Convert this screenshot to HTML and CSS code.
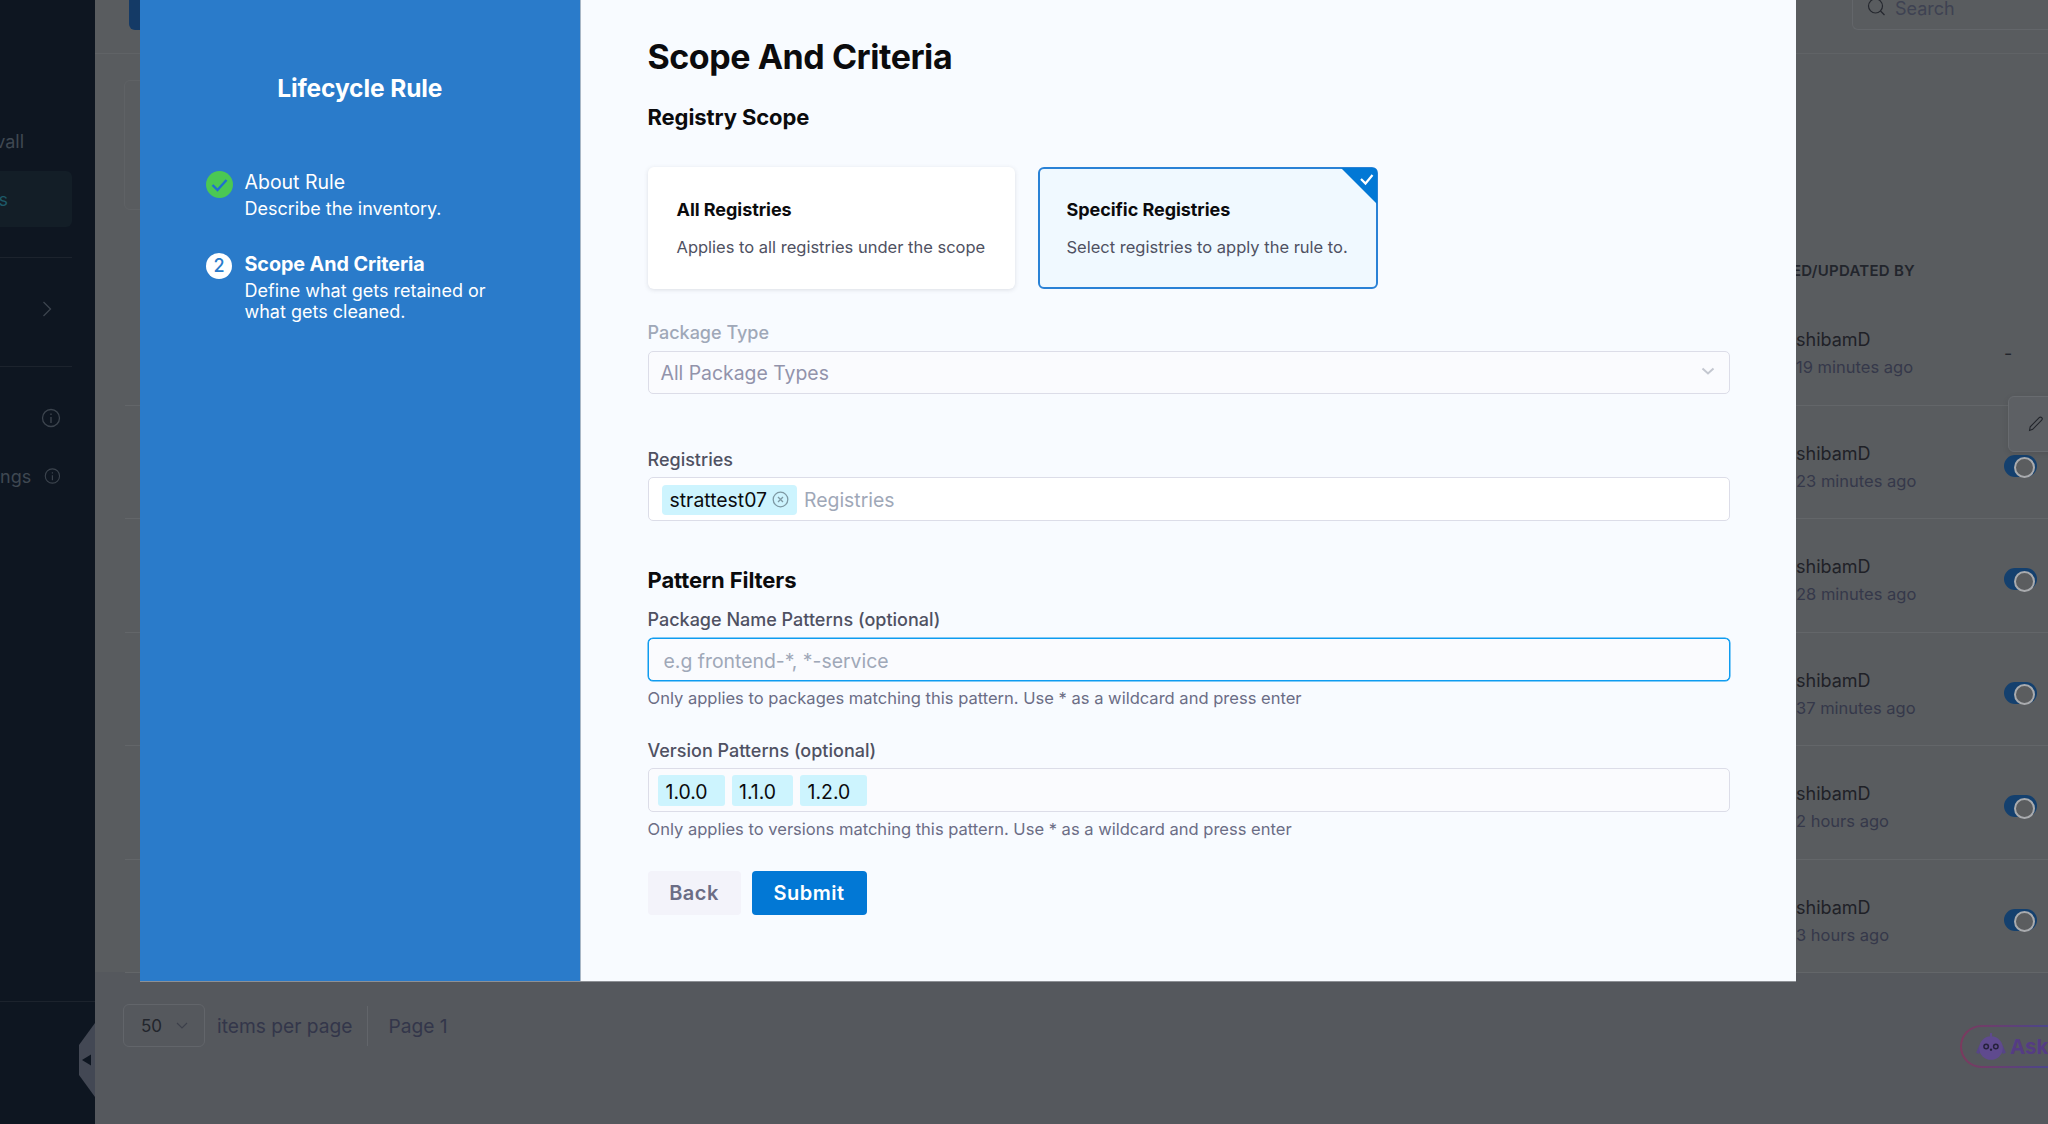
FILE: index.html
```html
<!DOCTYPE html>
<html lang="en">
<head>
<meta charset="utf-8">
<title>Lifecycle Rule</title>
<link rel="stylesheet" href="styles.css">
</head>
<body>
<div class="app">
  <aside class="sidebar">
    <div class="nav-item nav-first"><span>vall</span></div>
    <div class="nav-item nav-active"><span>s</span></div>
    <div class="nav-sep nav-sep-a"></div>
    <div class="nav-chevron">
      <svg width="12" height="18" viewBox="0 0 12 18"><path d="M2.500 2l7 7-7 7" fill="none" stroke="#3c444e" stroke-width="1.300"/></svg>
    </div>
    <div class="nav-sep nav-sep-b"></div>
    <div class="nav-info nav-info-a">
      <svg class="info" width="20" height="20" viewBox="0 0 20 20"><circle cx="10" cy="10" r="8.500" fill="none" stroke="#3c444e" stroke-width="1.300"/><path d="M10 9v6M10 5.500v1.500" stroke="#3c444e" stroke-width="1.400"/></svg>
    </div>
    <div class="nav-info nav-info-b">
      <span>ngs</span>
      <svg class="info" width="20" height="20" viewBox="0 0 20 20"><circle cx="10" cy="10" r="8.500" fill="none" stroke="#3c444e" stroke-width="1.300"/><path d="M10 9v6M10 5.500v1.500" stroke="#3c444e" stroke-width="1.400"/></svg>
    </div>
    <div class="nav-foot"></div>
    <svg class="collapse" width="16" height="74" viewBox="0 0 16 74"><path d="M16 0L0 22v30l16 22z" fill="#434854"/><path d="M3 37l9-5.500v11z" fill="#0e1621"/></svg>
  </aside>

  <main class="main">
    <div class="upper">
      <header class="topbar">
        <div class="cta"></div>
        <div class="search">
          <svg width="20" height="20" viewBox="0 0 20 20"><circle cx="8.500" cy="7" r="7" fill="none" stroke="#25282f" stroke-width="1.200"/><path d="M13.500 12l4 4" stroke="#25282f" stroke-width="1.200"/></svg>
          <span>Search</span>
        </div>
      </header>
      <div class="summary"></div>
      <div class="table">
        <div class="thead"><span>ED/UPDATED BY</span></div>
        <div class="row"><div class="cell-name"><b>shibamD</b><small>19 minutes ago</small></div><div class="dash">-</div></div>
        <div class="row"><div class="cell-name"><b>shibamD</b><small>23 minutes ago</small></div><div class="toggle"></div></div>
        <div class="row"><div class="cell-name"><b>shibamD</b><small>28 minutes ago</small></div><div class="toggle"></div></div>
        <div class="row"><div class="cell-name"><b>shibamD</b><small>37 minutes ago</small></div><div class="toggle"></div></div>
        <div class="row"><div class="cell-name"><b>shibamD</b><small>2 hours ago</small></div><div class="toggle"></div></div>
        <div class="row"><div class="cell-name"><b>shibamD</b><small>3 hours ago</small></div><div class="toggle"></div></div>
      </div>
    </div>
    <footer class="pager">
      <div class="page-size">
        <span>50</span>
        <svg width="12" height="8" viewBox="0 0 12 8"><path d="M1 1l5 5 5-5" fill="none" stroke="#3d404b" stroke-width="1.100"/></svg>
      </div>
      <span class="pager-text">items per page</span>
      <span class="pager-rule"></span>
      <span class="pager-text">Page 1</span>
      <span class="pager-box"></span>
    </footer>
  </main>

  <div class="edit-pop">
    <svg width="20" height="20" viewBox="0 0 20 20"><path d="M3.500 16.500l.7-3.700 9-9.200c.7-.7 1.800-.7 2.500 0 .7.700.7 1.800 0 2.500l-9 9.200z" fill="none" stroke="#22252b" stroke-width="1.100"/></svg>
  </div>

  <div class="ask">
    <svg width="30" height="28" viewBox="0 0 28 26">
      <path d="M14 0v4" stroke="#5f4a8e" stroke-width="2"/>
      <path d="M1.500 19l3-7M26.500 19l-3-7" stroke="#564488" stroke-width="3"/>
      <circle cx="14" cy="14" r="11" fill="#5f4a8e"/>
      <circle cx="9.500" cy="12.500" r="2.100" fill="none" stroke="#26213c" stroke-width="1.400"/>
      <circle cx="18.500" cy="12.500" r="2.100" fill="none" stroke="#26213c" stroke-width="1.400"/>
      <circle cx="14" cy="15.500" r="1.100" fill="#26213c"/>
    </svg>
    <span class="ask-text">Ask</span>
  </div>

  <section class="modal">
    <aside class="steps">
      <h2 class="steps-title">Lifecycle Rule</h2>
      <ol class="step-list">
        <li class="step">
          <svg class="step-icon" width="27" height="27" viewBox="0 0 27 27"><circle cx="13.500" cy="13.500" r="13.500" fill="#4bc853"/><path d="M6.500 14l5 5 9-10" fill="none" stroke="#1f6fd0" stroke-width="2.400"/></svg>
          <div><div class="step-name">About Rule</div><div class="step-desc">Describe the inventory.</div></div>
        </li>
        <li class="step step-current">
          <span class="step-num">2</span>
          <div><div class="step-name">Scope And Criteria</div><div class="step-desc">Define what gets retained or<br>what gets cleaned.</div></div>
        </li>
      </ol>
    </aside>

    <form class="form">
      <h1>Scope And Criteria</h1>
      <h3 class="sub-h">Registry Scope</h3>
      <div class="cards">
        <div class="card card-plain">
          <div class="card-title">All Registries</div>
          <div class="card-desc">Applies to all registries under the scope</div>
        </div>
        <div class="card card-on">
          <svg class="card-mark" width="36" height="36" viewBox="0 0 36 36"><path d="M0 0h32a4 4 0 0 1 4 4v32z" fill="#0278d5"/><path d="M20 11l4.500 4.500 7-8.500" fill="none" stroke="#fff" stroke-width="2.200"/></svg>
          <div class="card-title">Specific Registries</div>
          <div class="card-desc">Select registries to apply the rule to.</div>
        </div>
      </div>

      <div class="label label-muted lab-type">Package Type</div>
      <div class="box box-select">
        <span class="val-muted">All Package Types</span>
        <svg width="14" height="9" viewBox="0 0 14 9"><path d="M1.500 1.500l5.500 5 5.500-5" fill="none" stroke="#c3c7d0" stroke-width="2"/></svg>
      </div>

      <div class="label lab-reg">Registries</div>
      <div class="box box-reg">
        <span class="chip">strattest07
          <svg width="17" height="17" viewBox="0 0 17 17"><circle cx="8.500" cy="8.500" r="7.300" fill="none" stroke="#7e99a3" stroke-width="1.300"/><path d="M6 6l5 5M11 6l-5 5" stroke="#7e99a3" stroke-width="1.300"/></svg>
        </span>
        <span class="ph">Registries</span>
      </div>

      <h3 class="sub-h sub-pattern">Pattern Filters</h3>
      <div class="label lab-name">Package Name Patterns (optional)</div>
      <div class="box box-focus"><span class="ph">e.g frontend-*, *-service</span></div>
      <div class="help">Only applies to packages matching this pattern. Use * as a wildcard and press enter</div>

      <div class="label lab-ver">Version Patterns (optional)</div>
      <div class="box box-tags">
        <span class="tag">1.0.0</span>
        <span class="tag">1.1.0</span>
        <span class="tag">1.2.0</span>
      </div>
      <div class="help help-ver">Only applies to versions matching this pattern. Use * as a wildcard and press enter</div>

      <div class="actions">
        <button type="button" class="btn btn-back">Back</button>
        <button type="button" class="btn btn-submit">Submit</button>
      </div>
    </form>
  </section>
</div>
</body>
</html>
```

FILE: styles.css
```css
* { box-sizing: border-box; }
html, body { margin: 0; height: 100%; }
body {
  font-family: "Inter", "Liberation Sans", sans-serif;
  background: #55585d;
  overflow: hidden;
}
.app { position: relative; display: flex; width: 2048px; height: 1124px; overflow: hidden; }

/* sidebar */
.sidebar {
  position: relative;
  flex: 0 0 95px;
  width: 95px;
  background: #0e1621;
  color: #3f4852;
  font-size: 18px;
}
.nav-item { display: flex; justify-content: flex-end; align-items: center; height: 56px; width: 72px; }
.nav-first { margin-top: 113px; padding-right: 48px; height: 56px; }
.nav-active { margin-top: 2px; background: #131e27; border-radius: 0 6px 6px 0; padding-right: 64px; color: #1d5968; }
.nav-sep { height: 1px; width: 72px; background: #1c232d; }
.nav-sep-a { margin-top: 30px; }
.nav-chevron { height: 108px; display: flex; align-items: center; padding: 0 0 7px 41px; }
.nav-info { display: flex; align-items: center; justify-content: flex-end; gap: 13px; width: 61px; height: 30px; }
.nav-info-a { margin-top: 36px; }
.nav-info-b { margin-top: 28px; }
.nav-foot { position: absolute; left: 0; right: 0; top: 1001px; height: 1px; background: #1c232d; }
.collapse { position: absolute; right: 0; top: 1023px; }

/* page behind the dialog */
.main { flex: 1; min-width: 0; display: flex; flex-direction: column; overflow: hidden; }
.upper { background: #595c5f; height: 972px; }
.topbar {
  height: 54px;
  display: flex;
  justify-content: space-between;
  border-bottom: 1px solid #606366;
  padding-left: 34px;
}
.cta { width: 30px; height: 30px; background: #143a66; border-radius: 0 0 0 6px; }
.search {
  width: 196px;
  height: 30px;
  display: flex;
  align-items: center;
  gap: 8px;
  padding: 0 0 12px 14px;
  font-size: 18px;
  color: #3e4252;
  border: 1px solid #63666a;
  border-top: 0;
  border-right: 0;
  border-radius: 0 0 0 6px;
}
.summary {
  margin: 26px 0 0 29px;
  width: 1500px;
  height: 130px;
  border: 1px solid #5f6265;
  border-radius: 6px;
}
.table { margin: 41px 0 0 30px; }
.thead {
  height: 41px;
  display: flex;
  justify-content: flex-end;
  align-items: center;
  padding: 0 133px 2px 0;
  font-size: 15px;
  font-weight: 600;
  color: #22252c;
  letter-spacing: .25px;
}
.row {
  height: 113.500px;
  display: grid;
  grid-template-columns: 1fr 208px 44px;
  align-items: center;
  padding-top: 11px;
  border-bottom: 1px solid #636669;
}
.cell-name { grid-column: 2; display: flex; flex-direction: column; gap: 5px; }
.cell-name b { font-weight: 400; font-size: 18px; line-height: 22px; color: #1f2127; }
.cell-name small { font-size: 16.500px; line-height: 22px; color: #35384a; }
.dash { grid-column: 3; color: #22252c; font-size: 18px; }
.toggle {
  grid-column: 3;
  position: relative;
  width: 33px;
  height: 22px;
  margin-top: -3px;
  background: #14406e;
  border-radius: 11px;
}
.toggle::after {
  content: "";
  position: absolute;
  right: 2px;
  top: 2.500px;
  width: 17px;
  height: 17px;
  border-radius: 50%;
  background: #5b5d5f;
  border: 2px solid #a9abae;
}

/* pager */
.pager { position: relative; display: flex; align-items: center; height: 43px; margin: 32px 0 0 28px; font-size: 19.200px; color: #33364a; }
.page-size {
  width: 82px;
  height: 43px;
  display: flex;
  align-items: center;
  gap: 14px;
  padding-left: 17px;
  border: 1px solid #62656a;
  border-radius: 6px;
  font-size: 17px;
  color: #22252c;
  margin-right: 12px;
}
.pager-text { white-space: nowrap; }
.pager-rule { width: 1px; height: 40px; background: #62656a; margin: 0 20px 0 15px; }
.pager-box { position: absolute; left: 1939px; top: 1px; width: 40px; height: 40px; border: 1px solid #62656a; border-radius: 6px; }

/* overlays on the page */
.edit-pop {
  position: absolute;
  left: 2008px;
  top: 396px;
  width: 48px;
  height: 56px;
  background: #5d6064;
  border: 1px solid #686b6f;
  border-radius: 6px;
  box-shadow: 0 2px 6px rgba(0,0,0,.1);
  display: flex;
  align-items: center;
  padding-left: 17px;
}
.ask {
  position: absolute;
  left: 1960px;
  top: 1025px;
  width: 120px;
  height: 43px;
  border: 2px solid transparent;
  border-radius: 22px;
  background: linear-gradient(#55585d, #55585d) padding-box, linear-gradient(90deg, #7c3a5e, #3a4a9a) border-box;
  display: flex;
  align-items: center;
  gap: 4px;
  padding-left: 14px;
  font-size: 20.500px;
  font-weight: 700;
}
.ask-text { color: #553c84; }

/* dialog */
.modal {
  position: absolute;
  left: 139.500px;
  top: 0;
  width: 1656.500px;
  height: 982px;
  display: flex;
  border-bottom: 1px solid #8d9095;
}
.steps { flex: 0 0 441.500px; background: #2a7bca; color: #fff; border-right: 1px solid #a9b7c6; }
.steps-title { margin: 72px 0 0; text-align: center; font-size: 24.500px; line-height: 32px; font-weight: 700; letter-spacing: -.1px; }
.step-list { list-style: none; margin: 0; padding: 0 0 0 66.500px; }
.step { display: flex; gap: 11.500px; }
.step:first-child { margin-top: 65px; }
.step-current { margin-top: 32px; }
.step-icon { flex: none; margin-top: 2px; }
.step-num {
  flex: 0 0 26px;
  width: 26px;
  height: 26px;
  margin: 2px 1px 0 0;
  border-radius: 50%;
  background: #fff;
  color: #2a7bca;
  font-size: 18px;
  font-weight: 500;
  line-height: 26px;
  text-align: center;
}
.step-name { font-size: 19.500px; line-height: 26px; }
.step-desc { font-size: 18px; line-height: 21px; }
.step:first-child .step-desc { margin-top: 3px; }
.step-current .step-desc { margin-top: 3px; }
.step-current .step-name { font-size: 19.800px; font-weight: 700; letter-spacing: -.1px; }

.form { flex: 1; background: #f8fbff; padding: 36px 66px 0 66.500px; }
h1 { margin: 0 0 24px; font-size: 34px; line-height: 42px; font-weight: 700; letter-spacing: -.45px; color: #0b0b0d; }
.sub-h { margin: 0; font-size: 22px; line-height: 30px; font-weight: 700; letter-spacing: -.1px; color: #0b0b0d; }
.sub-pattern { margin-top: 44px; }
.cards { display: flex; gap: 23px; margin-top: 35px; }
.card { position: relative; height: 122px; padding: 31px 0 0 29px; border-radius: 6px; }
.card-plain { width: 367px; background: #fff; box-shadow: 0 1px 4px rgba(96,97,112,.18); }
.card-on { width: 340px; padding-left: 27px; padding-top: 29px; background: #f0f9ff; border: 2px solid #2a82d6; }
.card-mark { position: absolute; top: -1px; right: -1px; }
.card-title { font-size: 18px; line-height: 24px; font-weight: 700; letter-spacing: -.05px; color: #0b0b0d; }
.card-desc { margin-top: 13px; font-size: 16.500px; line-height: 24px; color: #4f5162; }

.label { font-size: 18px; line-height: 22px; font-weight: 500; color: #4f5162; margin-bottom: 7px; }
.label-muted { color: #9fa8b8; }
.lab-type { margin-top: 33px; }
.lab-reg { margin-top: 55px; margin-bottom: 6px; }
.lab-name { margin-top: 14px; }
.lab-ver { margin-top: 32px; margin-bottom: 6px; }
.box {
  display: flex;
  align-items: center;
  width: 1082px;
  height: 43px;
  padding-top: 1px;
  border: 1.500px solid #dcdde8;
  border-radius: 5px;
  font-size: 19.400px;
  background: #fafbfe;
}
.box-select { justify-content: space-between; padding: 0 14px 0 12px; }
.box-select > svg { margin-top: -2px; }
.val-muted { color: #9293ab; }
.box-reg { height: 44px; padding-left: 13px; gap: 7px; background: #fff; }
.chip {
  display: inline-flex;
  align-items: center;
  gap: 5px;
  height: 30px;
  padding: 0 8px;
  background: #cdf4fe;
  border-radius: 4px;
  color: #0b0b0d;
}
.ph { color: #9fa8b8; }
.box-focus { padding: 2px 0 0 15px; height: 43px; border-color: #0e9cf0; box-shadow: 0 0 0 .5px #0e9cf0; }
.help { margin-top: 7px; font-size: 16.550px; line-height: 20px; color: #6b6d85; }
.help-ver { margin-top: 7px; }
.box-tags { height: 44px; padding-left: 9.500px; gap: 7px; }
.tag {
  height: 31px;
  padding: 2px 17px 0 7.500px;
  display: inline-flex;
  align-items: center;
  background: #cdf4fe;
  border-radius: 3px;
  color: #0b0b0d;
}
.actions { display: flex; gap: 11px; margin-top: 32px; }
.btn {
  height: 44px;
  border: 0;
  border-radius: 4px;
  font-family: inherit;
  font-size: 20px;
  font-weight: 600;
  letter-spacing: .5px;
}
.btn-back { width: 93px; background: #f3f3fa; color: #6b6d85; }
.btn-submit { width: 115px; background: #0278d5; color: #fff; }
```
